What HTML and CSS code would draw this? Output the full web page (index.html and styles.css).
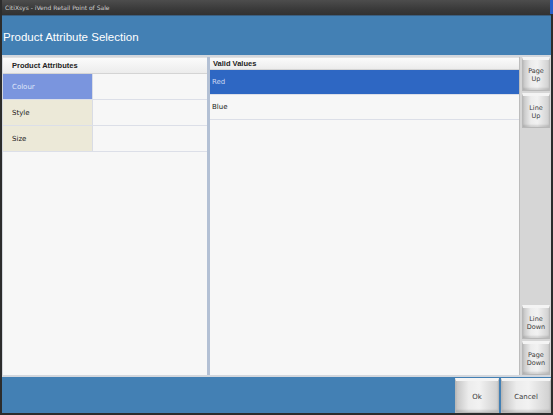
FILE: index.html
```html
<!DOCTYPE html>
<html>
<head>
<meta charset="utf-8">
<link rel="stylesheet" href="styles.css">
</head>
<body>
<div class="window">
  <div class="titlebar"><span class="title-text">CitiXsys - iVend Retail Point of Sale</span><span class="corner"></span></div>
  <div class="header"><span class="header-text">Product Attribute Selection</span></div>
  <div class="content">
    <div class="panel attrs">
      <div class="panel-head">Product Attributes</div>
      <div class="attr-row selected"><div class="attr-name">Colour</div><div class="attr-val"></div></div>
      <div class="attr-row"><div class="attr-name">Style</div><div class="attr-val"></div></div>
      <div class="attr-row"><div class="attr-name">Size</div><div class="attr-val"></div></div>
    </div>
    <div class="splitter"></div>
    <div class="panel values">
      <div class="panel-head vhead">Valid Values</div>
      <div class="val-row selected">Red</div>
      <div class="val-row">Blue</div>
    </div>
    <div class="nav">
      <div class="btn nav-btn pu">Page<br>Up</div>
      <div class="btn nav-btn lu">Line<br>Up</div>
      <div class="nav-spacer"></div>
      <div class="btn nav-btn ld">Line<br>Down</div>
      <div class="btn nav-btn pd">Page<br>Down</div>
    </div>
  </div>
  <div class="footer">
    <div class="btn foot-btn ok">Ok</div>
    <div class="btn foot-btn cancel">Cancel</div>
  </div>
</div>
</body>
</html>
```
FILE: styles.css
```css
html, body {
  margin: 0;
  padding: 0;
  background: #2b2b2b;
}
body {
  font-family: "DejaVu Sans", Tahoma, sans-serif;
}
.window {
  width: 553px;
  height: 415px;
  box-sizing: border-box;
  display: flex;
  flex-direction: column;
  background: #2e2e2e;
  border-left: 2px solid #2c2c2c;
  border-right: 2px solid #2c2c2c;
  border-bottom: 2px solid #2c2c2c;
}
.titlebar {
  height: 15px;
  flex: none;
  display: flex;
  align-items: center;
  position: relative;
  background: linear-gradient(#4d4d4d, #3a3a3a 60%, #323232);
}
.title-text {
  font-family: "DejaVu Sans", sans-serif;
  font-size: 6px;
  color: #cfcfcf;
  margin-left: 3px;
}
.corner {
  position: absolute;
  right: -2px;
  top: 0;
  width: 3px;
  height: 14px;
  background: #2c5fc8;
}
.header {
  height: 40px;
  flex: none;
  background: #4380b4;
  display: flex;
  align-items: center;
  border-top: 1px solid #3b5f80;
  box-sizing: border-box;
}
.header-text {
  font-family: "Liberation Sans", Arial, sans-serif;
  font-size: 11.5px;
  color: #ffffff;
  margin-left: 1px;
  padding-top: 2px;
}
.content {
  flex: 1;
  display: flex;
  background: #d3d7dd;
  padding: 2px 0 2px 1px;
}
.panel {
  background: #f7f7f7;
  display: flex;
  flex-direction: column;
}
.attrs {
  width: 204px;
  border-top: 1px solid #e2e2e2;
  box-sizing: border-box;
}
.panel-head {
  height: 16px;
  flex: none;
  box-sizing: border-box;
  background: linear-gradient(#fbfbfb, #ececec);
  border-bottom: 1px solid #d4d4d4;
  font-family: "Liberation Sans", Arial, sans-serif;
  font-size: 7.5px;
  font-weight: bold;
  color: #222;
  display: flex;
  align-items: center;
  padding-left: 9px;
}
.attr-row {
  height: 26px;
  display: flex;
  border-bottom: 1px solid #dcdfe8;
  box-sizing: border-box;
}
.attr-name {
  width: 90px;
  background: #ece9d8;
  border-right: 1px solid #d9dce5;
  font-size: 7px;
  color: #1a1a1a;
  display: flex;
  align-items: center;
  padding-left: 9px;
  box-sizing: border-box;
}
.attr-val {
  flex: 1;
  background: #f7f7f7;
}
.attr-row.selected .attr-name {
  background: #7a95de;
  color: #dfe6fa;
}
.splitter {
  width: 3px;
  background: #b3c0d4;
  flex: none;
}
.values {
  width: 309px;
  flex: none;
  border-top: 1px solid #e2e2e2;
  box-sizing: border-box;
}
.vhead {
  height: 12px;
  padding-left: 3px;
}
.val-row {
  height: 25px;
  box-sizing: border-box;
  border-bottom: 1px solid #dcdfe8;
  font-size: 7px;
  color: #1a1a1a;
  display: flex;
  align-items: center;
  padding-left: 2px;
}
.val-row.selected {
  background: #2e67c3;
  color: #c9d6f2;
}
.nav {
  flex: 1;
  display: flex;
  flex-direction: column;
  background: #d6d6d6;
  border-left: 1px solid #bcbcbc;
  padding: 0 1px 0 2px;
  gap: 2px;
}
.btn {
  box-sizing: border-box;
  background: linear-gradient(90deg, #c4c4c4, #ececec 30%, #f2f2f2 55%, #d0d0d0);
  border: 1px solid #b8b8b8;
  border-top: 3px solid #f4f4f4;
  box-shadow: inset 0 -2px 2px rgba(0,0,0,0.12);
  font-size: 6.5px;
  color: #3a3a3a;
  display: flex;
  align-items: center;
  justify-content: center;
  text-align: center;
  line-height: 8px;
}
.nav-btn {
  height: 34px;
  flex: none;
}
.nav-btn.lu { height: 35px; }
.nav-spacer { flex: 1; }
.footer {
  height: 36px;
  flex: none;
  background: #4380b4;
  display: flex;
  justify-content: flex-end;
  gap: 2px;
  padding-top: 1px;
  box-sizing: border-box;
}
.foot-btn {
  height: 35px;
  font-size: 7px;
}
.ok { width: 44px; }
.cancel { width: 50px; }
```
